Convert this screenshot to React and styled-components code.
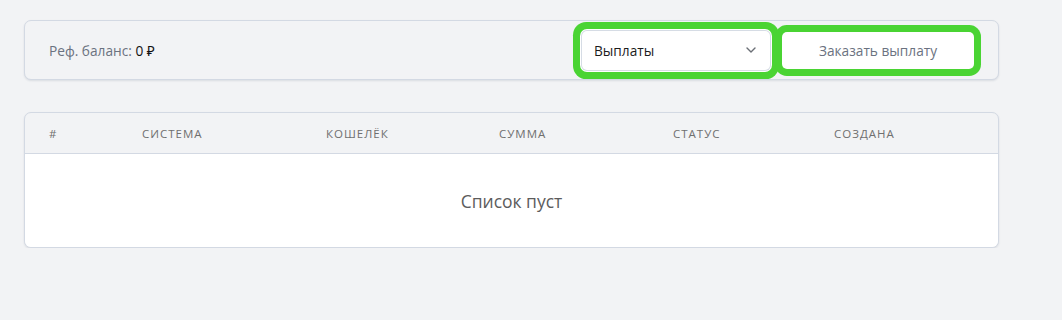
import React from 'react';
import styled, { createGlobalStyle } from 'styled-components';

const GlobalStyle = createGlobalStyle`
  body {
    margin: 0;
    background: #f2f3f5;
    font-family: "Open Sans", "Noto Sans", sans-serif;
  }
`

const Page = styled.div`
  width: 975px;
  padding: 20px 0 0 24px;
  display: flex;
  flex-direction: column;
  gap: 32px;
`

const Card = styled.div`
  border: 1px solid #d3d9e3;
  border-radius: 7px;
  background: #f2f3f5;
  box-shadow: 0 1px 2px rgba(40, 60, 90, 0.12);
  overflow: ${props => props.clip ? 'hidden' : 'visible'};
`

const Toolbar = styled.div`
  height: 58px;
  display: flex;
  align-items: center;
  padding: 0 24px;
`

const Balance = styled.div`
  font-size: 13.7px;
  color: #6b7280;
  flex: 1;
  span {
    color: #111;
  }
`

const Select = styled.div`
  width: 188px;
  height: 39px;
  box-sizing: border-box;
  display: flex;
  align-items: center;
  justify-content: space-between;
  padding: 0 14px 0 12px;
  background: #fff;
  font-size: 13.7px;
  color: #1c1c1c;
  box-shadow: 0 0 0 1px #d6dce5, 0 0 0 2px #fff, 0 0 0 9px #4ad433;
  border-radius: 5px;
`

const Button = styled.div`
  width: 192px;
  height: 37px;
  margin-left: 12px;
  display: flex;
  align-items: center;
  justify-content: center;
  background: #fff;
  border-radius: 5px;
  font-size: 13.7px;
  color: #6b7280;
  box-shadow: 0 0 0 7px #4ad433;
`

const HeadRow = styled.div`
  display: grid;
  grid-template-columns: 93px 184px 173px 174px 161px 1fr;
  height: 40px;
  align-items: center;
  border-bottom: 1px solid #d3d9e3;
  padding-left: 24px;
`

const HeadCell = styled.div`
  font-size: 11.5px;
  text-transform: uppercase;
  letter-spacing: 1px;
  color: #6f6f6f;
`

const Empty = styled.div`
  height: 93px;
  background: #fff;
  display: flex;
  align-items: center;
  justify-content: center;
  font-size: 17.5px;
  color: #5c5c5c;
`

const Chevron = () => (
  <svg width="10" height="6" viewBox="0 0 10 6" fill="none">
    <path d="M1 1l4 4 4-4" stroke="#6b6f76" strokeWidth="1.4" strokeLinecap="round" strokeLinejoin="round" />
  </svg>
)

const columns = ['#', 'Система', 'Кошелёк', 'Сумма', 'Статус', 'Создана']

const App = () => {
  return (
    <>
      <GlobalStyle />
      <Page>
        <Card>
          <Toolbar>
            <Balance>Реф. баланс: <span>0 ₽</span></Balance>
            <Select>
              Выплаты
              <Chevron />
            </Select>
            <Button>Заказать выплату</Button>
          </Toolbar>
        </Card>
        <Card clip>
          <HeadRow>
            {columns.map(c => <HeadCell key={c}>{c}</HeadCell>)}
          </HeadRow>
          <Empty>Список пуст</Empty>
        </Card>
      </Page>
    </>
  )
}

export default App
